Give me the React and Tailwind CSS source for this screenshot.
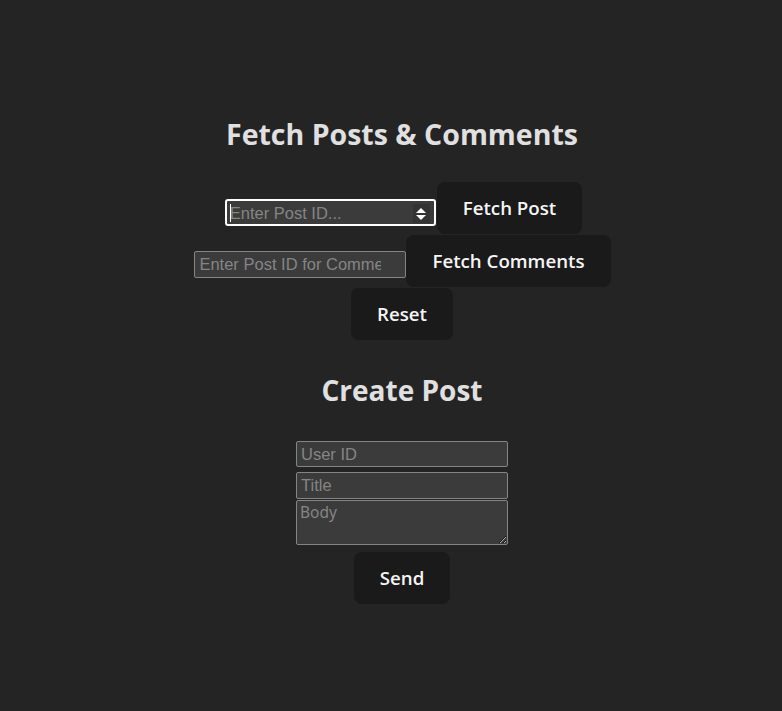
import { useState } from "react";

const font = { fontFamily: '"Open Sans", "Noto Sans", sans-serif' };
const inputFont = { fontFamily: '"Liberation Sans", Arial, sans-serif' };

const Button = ({ children, className = "" }) => (
  <button
    className={`rounded-lg border border-transparent bg-[#1a1a1a] px-[25px] py-3 text-[18.7px] font-semibold leading-[26px] text-[#f5f5f5] ${className}`}
    style={font}
  >
    {children}
  </button>
);

const Spinner = () => (
  <div className="absolute right-[4px] top-[3px] flex h-[19px] w-[17px] items-center justify-center bg-[#333]">
    <svg width="10" height="14" viewBox="0 0 10 14" fill="#fff">
      <polygon points="5,1 10,6 0,6" />
      <polygon points="0,8 10,8 5,13" />
    </svg>
  </div>
);

const inputCls =
  "w-[212px] rounded-[2px] border border-[#858585] bg-[#3b3b3b] px-[4px] text-[16.5px] text-white outline-none placeholder:text-[#858585]";

export default function App() {
  const [postId, setPostId] = useState("");
  const [commentId, setCommentId] = useState("");

  return (
    <div className="min-h-[711px] w-full bg-[#242424] pl-[22px] text-[#e0e0e0] [color-scheme:dark]">
      <div className="flex flex-col items-center pt-[114px]">
        <h2 className="text-[28.5px] font-bold leading-[40px] text-[#e0e0e0]" style={font}>
          Fetch Posts &amp; Comments
        </h2>

        {/* fetch controls */}
        <div className="mt-[28px] flex flex-col items-center gap-[1px]">
          <div className="flex pl-[3px]">
            <div className="relative mb-[8px] h-[27px] w-[211px] self-end rounded-[3px] border-2 border-white bg-[#3b3b3b]">
              <input
                value={postId}
                onChange={(e) => setPostId(e.target.value)}
                placeholder="Enter Post ID..."
                className="h-full w-full bg-transparent pl-[3px] pr-[24px] text-[16.5px] text-white outline-none placeholder:text-[#858585]"
                style={inputFont}
              />
              <span className="absolute left-[3px] top-[3px] h-[18px] w-px bg-white" />
              <Spinner />
            </div>
            <Button className="ml-[1px]">Fetch Post</Button>
          </div>

          <div className="flex pl-[1px]">
            <input
              value={commentId}
              onChange={(e) => setCommentId(e.target.value)}
              placeholder="Enter Post ID for Comments..."
              className={`mb-[9px] h-[27px] self-end pr-[24px] ${inputCls}`}
              style={inputFont}
            />
            <Button>Fetch Comments</Button>
          </div>

          <Button>Reset</Button>
        </div>

        <h2 className="mt-[30px] text-[28px] font-bold leading-[40px] text-[#e0e0e0]" style={font}>
          Create Post
        </h2>

        {/* create form */}
        <form className="mt-[31px] flex flex-col items-center" onSubmit={(e) => e.preventDefault()}>
          <input placeholder="User ID" className={`h-[26px] ${inputCls}`} style={inputFont} />
          <input placeholder="Title" className={`mt-[5px] h-[27px] ${inputCls}`} style={inputFont} />
          <textarea
            placeholder="Body"
            className="mt-[1px] h-[45px] w-[212px] rounded-[2px] border border-[#858585] bg-[#3b3b3b] px-[3px] py-0 text-[15.5px] text-white outline-none placeholder:text-[#858585]"
            style={{ fontFamily: '"Noto Sans", "Open Sans", sans-serif' }}
          />
          <Button className="mt-[7px]">Send</Button>
        </form>
      </div>
    </div>
  );
}
